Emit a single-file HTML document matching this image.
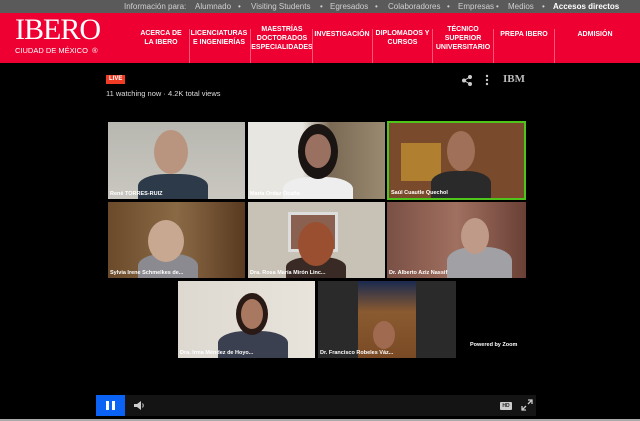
<!DOCTYPE html>
<html><head><meta charset="utf-8"><style>
*{margin:0;padding:0;box-sizing:border-box}
body{width:640px;height:421px;background:#000;font-family:"Liberation Sans",sans-serif;position:relative;overflow:hidden}
.top{position:absolute;left:0;top:0;width:640px;height:13px;background:#5a5a5a;color:#cfcfcf;font-size:8px;line-height:13px}
.top span{position:absolute;top:0}
.red{position:absolute;left:0;top:13px;width:640px;height:50px;background:#ee0033}
.logo{position:absolute;left:15px;top:2px;color:#fff;font-family:"Liberation Serif",serif;font-size:30px;letter-spacing:-1px;line-height:30px}
.sub{position:absolute;left:15px;top:33px;color:#fff;font-size:7.5px}
.nav{position:absolute;top:0;height:50px;color:#fff;font-size:7px;font-weight:bold;text-align:center;display:flex;align-items:center;justify-content:center;line-height:9px}
.sep{position:absolute;top:16px;width:1px;height:34px;background:#f57}
.tile{position:absolute;overflow:hidden}
.lbl{position:absolute;left:2px;bottom:2px;color:#fff;font-size:5.5px;font-weight:bold}
.head{position:absolute;border-radius:50%}
.body{position:absolute;border-radius:40% 40% 0 0}
</style></head><body>
<div class="top">
<span style="left:124px">Información para:</span>
<span style="left:195px">Alumnado</span><span style="left:238px">•</span>
<span style="left:251px">Visiting Students</span><span style="left:320px">•</span>
<span style="left:330px">Egresados</span><span style="left:375px">•</span>
<span style="left:388px">Colaboradores</span><span style="left:447px">•</span>
<span style="left:458px">Empresas</span><span style="left:496px">•</span>
<span style="left:508px">Medios</span><span style="left:542px">•</span>
<span style="left:553px;color:#fff;font-weight:bold">Accesos directos</span>
</div>
<div class="red">
<div class="logo">IBERO</div>
<div class="sub">CIUDAD DE MÉXICO &nbsp;®</div>
<div class="nav" style="left:136px;width:50px">ACERCA DE<br>LA IBERO</div>
<div class="sep" style="left:189px;top:16px"></div>
<div class="nav" style="left:190px;width:58px">LICENCIATURAS<br>E INGENIERÍAS</div>
<div class="sep" style="left:250px"></div>
<div class="nav" style="left:252px;width:60px">MAESTRÍAS<br>DOCTORADOS<br>ESPECIALIDADES</div>
<div class="sep" style="left:312px"></div>
<div class="nav" style="left:313px;width:58px;align-items:flex-start;padding-top:17px">INVESTIGACIÓN</div>
<div class="sep" style="left:372px"></div>
<div class="nav" style="left:374px;width:57px">DIPLOMADOS Y<br>CURSOS</div>
<div class="sep" style="left:432px"></div>
<div class="nav" style="left:434px;width:58px">TÉCNICO<br>SUPERIOR<br>UNIVERSITARIO</div>
<div class="sep" style="left:493px"></div>
<div class="nav" style="left:495px;width:58px;align-items:flex-start;padding-top:17px">PREPA IBERO</div>
<div class="sep" style="left:554px"></div>
<div class="nav" style="left:556px;width:78px;align-items:flex-start;padding-top:17px">ADMISIÓN</div>
</div>

<div style="position:absolute;left:106px;top:75px;background:#f03c24;color:#fff;font-size:6px;font-weight:bold;padding:1px 3px;line-height:7px">LIVE</div>
<div style="position:absolute;left:106px;top:89px;color:#ddd;font-size:7.5px">11 watching now · 4.2K total views</div>
<svg style="position:absolute;left:461px;top:75px" width="12" height="11" viewBox="0 0 12 11"><g fill="#ccc" stroke="#ccc"><circle cx="9" cy="2" r="1.5"/><circle cx="3" cy="5.5" r="1.5"/><circle cx="9" cy="9" r="1.5"/><path d="M9 2L3 5.5L9 9" fill="none" stroke-width="1"/></g></svg>
<svg style="position:absolute;left:485px;top:74px" width="4" height="12"><g fill="#ccc"><circle cx="2" cy="2" r="1.2"/><circle cx="2" cy="6" r="1.2"/><circle cx="2" cy="10" r="1.2"/></g></svg>
<div style="position:absolute;left:503px;top:73px;color:#bbb;font-family:'Liberation Serif',serif;font-weight:bold;font-size:11px">IBM</div>

<!-- row1 -->
<div class="tile" style="left:108px;top:122px;width:137px;height:77px;background:linear-gradient(#b8b7b0,#c9c7c0)">
<div class="body" style="left:30px;top:52px;width:70px;height:30px;background:#2c3a4a"></div>
<div class="head" style="left:46px;top:8px;width:34px;height:44px;background:#b99580"></div>
<div class="lbl">René TORRES-RUIZ</div></div>
<div class="tile" style="left:248px;top:122px;width:137px;height:77px;background:linear-gradient(90deg,#e8e6e0 0 40%,#7a6a55 60%,#9a8a70)">
<div class="body" style="left:35px;top:55px;width:70px;height:30px;background:#eee"></div>
<div class="head" style="left:50px;top:2px;width:40px;height:55px;background:#1a1512"></div>
<div class="head" style="left:57px;top:12px;width:26px;height:34px;background:#9a7060"></div>
<div class="lbl">María Ordaz Ocaña</div></div>
<div class="tile" style="left:387px;top:121px;width:139px;height:79px;border:2px solid #4fc51c;background:#7a4a2c">
<div style="position:absolute;left:12px;top:20px;width:40px;height:38px;background:#b08030"></div>
<div class="body" style="left:42px;top:48px;width:60px;height:30px;background:#2a2a2a"></div>
<div class="head" style="left:58px;top:8px;width:28px;height:40px;background:#a07058"></div>
<div class="lbl">Saúl Cuautle Quechol</div></div>
<!-- row2 -->
<div class="tile" style="left:108px;top:202px;width:137px;height:76px;background:linear-gradient(90deg,#6a4a2a,#8a6a45,#5a3a20)">
<div class="body" style="left:30px;top:52px;width:60px;height:30px;background:#8a8a90"></div>
<div class="head" style="left:40px;top:18px;width:36px;height:42px;background:#c8a890"></div>
<div class="lbl">Sylvia Irene Schmelkes de...</div></div>
<div class="tile" style="left:248px;top:202px;width:137px;height:76px;background:#c8c2b6">
<div style="position:absolute;left:40px;top:10px;width:50px;height:40px;background:#8a6050;border:3px solid #ddd"></div>
<div class="body" style="left:38px;top:55px;width:60px;height:25px;background:#3a2a25"></div>
<div class="head" style="left:50px;top:20px;width:36px;height:44px;background:#9a5030"></div>
<div class="lbl">Dra. Rosa María Mirón Linc...</div></div>
<div class="tile" style="left:387px;top:202px;width:139px;height:76px;background:linear-gradient(90deg,#7a5045,#a07060,#6a4035)">
<div class="body" style="left:60px;top:45px;width:65px;height:35px;background:#a0a0a5"></div>
<div class="head" style="left:74px;top:16px;width:28px;height:36px;background:#c09a88"></div>
<div class="lbl">Dr. Alberto Aziz Nassif</div></div>
<!-- row3 -->
<div class="tile" style="left:178px;top:281px;width:137px;height:77px;background:linear-gradient(90deg,#ddd8d0,#e8e4dc)">
<div class="body" style="left:40px;top:50px;width:70px;height:30px;background:#3a4050"></div>
<div class="head" style="left:58px;top:12px;width:32px;height:42px;background:#2a1a15"></div>
<div class="head" style="left:63px;top:18px;width:22px;height:30px;background:#a87860"></div>
<div class="lbl">Dra. Irma Méndez de Hoyo...</div></div>
<div class="tile" style="left:318px;top:281px;width:138px;height:77px;background:#2a2a2a">
<div style="position:absolute;left:40px;top:0;width:58px;height:77px;background:linear-gradient(#1a2a50,#8a5a30 40%,#7a4a25)"></div>
<div class="head" style="left:55px;top:40px;width:22px;height:28px;background:#a06a50"></div>
<div class="lbl">Dr. Francisco Robeles Váz...</div></div>
<div style="position:absolute;left:470px;top:342px;color:#fff;font-size:5.5px;font-weight:bold">Powered by Zoom</div>

<!-- controls -->
<div style="position:absolute;left:96px;top:395px;width:440px;height:21px;background:#141414"></div>
<div style="position:absolute;left:96px;top:395px;width:29px;height:21px;background:#0a63f5"></div>
<div style="position:absolute;left:106px;top:401px;width:3px;height:9px;background:#fff"></div>
<div style="position:absolute;left:112px;top:401px;width:3px;height:9px;background:#fff"></div>
<svg style="position:absolute;left:133px;top:400px" width="12" height="11" viewBox="0 0 12 11"><path d="M1 4h3l4-3v9l-4-3H1z" fill="#ccc"/><path d="M9.5 3.5q1.5 2 0 4" stroke="#ccc" fill="none"/></svg>
<div style="position:absolute;left:500px;top:402px;width:12px;height:8px;background:#ccc;border-radius:1px;color:#222;font-size:5px;font-weight:bold;line-height:8px;text-align:center">HD</div>
<svg style="position:absolute;left:521px;top:399px" width="12" height="12" viewBox="0 0 12 12"><g stroke="#ccc" stroke-width="1.3" fill="none"><path d="M7 1h4v4M11 1L7 5M5 11H1V7M1 11l4-4"/></g></svg>
<div style="position:absolute;left:0;top:419px;width:640px;height:2px;background:#aaa"></div>
</body></html>
